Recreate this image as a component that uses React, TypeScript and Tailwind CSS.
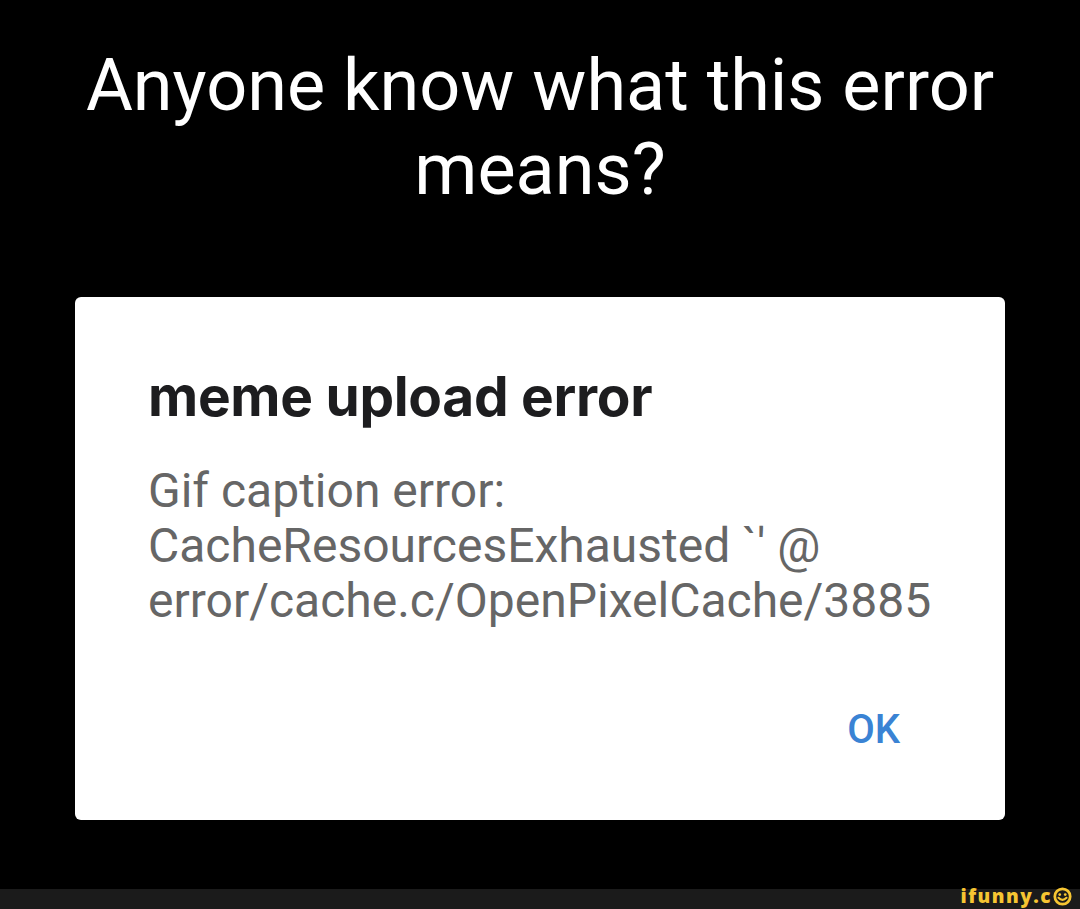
import React from 'react';

const Smiley: React.FC = () => (
  <svg width="19" height="19" viewBox="0 0 18 18" className="inline-block ml-[1px] align-[-3px]">
    <circle cx="9" cy="9" r="7.3" fill="none" stroke="#f6c532" strokeWidth="2.6" />
    <circle cx="6.4" cy="7.2" r="1.3" fill="#f6c532" />
    <circle cx="11.6" cy="7.2" r="1.3" fill="#f6c532" />
    <path d="M5.2 10.2 Q9 14 12.8 10.2" fill="none" stroke="#f6c532" strokeWidth="2" strokeLinecap="round" />
  </svg>
);

const App: React.FC = () => {
  return (
    <div className="w-[1080px] h-[909px] bg-black flex flex-col overflow-hidden">
      <h1 className="pt-[44px] text-center text-white text-[72px] leading-[84px] font-normal font-['Roboto',sans-serif]">
        Anyone know what this error
        <br />
        means?
      </h1>

      <div className="mt-[85px] mx-[75px] h-[523px] bg-white rounded-[6px] pl-[73px] pr-[105px] pt-[67px] flex flex-col">
        <h2 className="text-[55px] leading-[64px] font-bold text-[#1d1d1f] font-['Inter',sans-serif] tracking-[-0.3px]">
          meme upload error
        </h2>
        <p className="mt-[35px] text-[48px] leading-[55px] text-[#666666] font-['Roboto',sans-serif]">
          Gif caption error:
          <br />
          CacheResourcesExhausted `' @
          <br />
          error/cache.c/OpenPixelCache/3885
        </p>
        <div className="mt-[78px] flex justify-end">
          <span className="text-[40px] leading-[48px] font-medium text-[#3a83d4] font-['Roboto',sans-serif]">OK</span>
        </div>
      </div>

      <div className="mt-auto h-[20px] bg-[#1b1b1b] flex items-end justify-end pr-[8px]">
        <span className="text-[19px] leading-[26px] font-extrabold text-[#f6c532] font-['Open_Sans',sans-serif] tracking-[1.5px] whitespace-nowrap">
          ifunny.c<Smiley />
        </span>
      </div>
    </div>
  );
};

export default App;
